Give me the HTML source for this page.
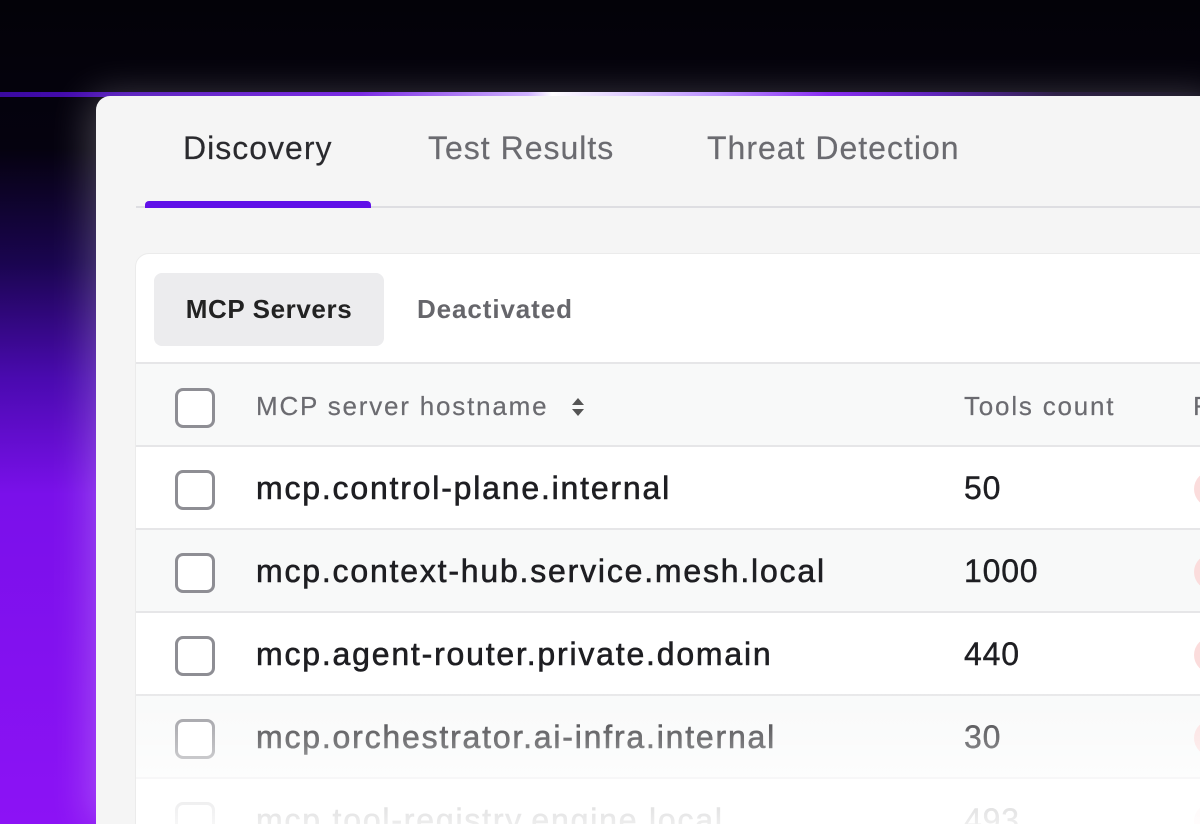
<!DOCTYPE html>
<html><head><style>
*{margin:0;padding:0;box-sizing:border-box}
html,body{width:1200px;height:824px;overflow:hidden}
body{background:#030208;font-family:"Liberation Sans",sans-serif;position:relative}
.bg{position:absolute;left:0;top:0;width:1200px;height:824px;background:linear-gradient(180deg,#030208 0%,#05020f 18%,#1a0550 32%,#4a0ab0 46%,#7a10ea 60%,#8c12f5 100%)}
.glow{position:absolute;left:0;top:92px;width:1200px;height:5px;background:linear-gradient(90deg,#3a0aa0 0%,#6a10e0 30%,#c9a8ff 44%,#ffffff 46%,#b080ff 60%,#7a12f0 69%,#4a0ab0 78%,#150530 88%,#050210 100%)}
.card{position:absolute;left:96px;top:96px;width:1130px;height:728px;background:#f5f5f5;border-radius:14px 14px 0 0;overflow:hidden;box-shadow:-6px 0 40px rgba(255,255,255,.25)}
.tab{position:absolute;top:34px;font-size:32px;color:#6b6b70;letter-spacing:1px;-webkit-text-stroke:.2px currentColor}
.tabline{position:absolute;left:40px;top:110px;width:1100px;height:2px;background:#dedee2}
.tabbar{position:absolute;left:49px;top:105px;width:226px;height:7px;background:#6010e8;border-radius:4px 4px 0 0}
.inner{position:absolute;left:39px;top:157px;width:1100px;height:580px;background:#fff;border-radius:14px 14px 0 0;border:1px solid #ebebeb;overflow:hidden}
.pill{position:absolute;left:18px;top:19px;width:230px;height:73px;background:#ececee;border-radius:8px;font-size:26px;font-weight:bold;color:#222;line-height:73px;text-align:center;letter-spacing:.6px}
.deact{position:absolute;left:281px;top:19px;line-height:73px;font-size:26px;font-weight:bold;color:#66666b;letter-spacing:.9px}
.row{position:absolute;left:0;width:1100px;height:83px;border-top:2px solid #e6e6e8}
.cb{position:absolute;left:39px;top:23px;width:40px;height:40px;border:3px solid #8e8e94;border-radius:8px;background:#fff}
.host{position:absolute;left:120px;top:0;line-height:82px;font-size:32px;color:#1e1e22;letter-spacing:1.8px;-webkit-text-stroke:.6px currentColor}
.cnt{position:absolute;left:828px;top:0;line-height:82px;font-size:32px;color:#1e1e22;letter-spacing:.8px;-webkit-text-stroke:.4px currentColor}
.dot{position:absolute;left:1058px;top:24px;width:36px;height:36px;border-radius:50%;background:#fbdcdc}
.hdr .host,.hdr .cnt{font-size:26px;color:#6b6b70;letter-spacing:1.8px;-webkit-text-stroke:.2px currentColor}
.fade{position:absolute;left:0;top:440px;width:1100px;height:140px;background:linear-gradient(180deg,rgba(255,255,255,.1) 0%,rgba(255,255,255,.4) 35%,rgba(255,255,255,.85) 75%,rgba(255,255,255,.95) 100%)}
</style></head><body>
<div class="bg"></div>
<div class="glow"></div>
<div class="card">
  <div class="tab" style="left:87px;color:#2a2a2e">Discovery</div>
  <div class="tab" style="left:332px">Test Results</div>
  <div class="tab" style="left:611px">Threat Detection</div>
  <div class="tabline"></div>
  <div class="tabbar"></div>
  <div class="inner">
    <div class="pill">MCP Servers</div>
    <div class="deact">Deactivated</div>
    <div class="row hdr" style="top:108px;height:85px;background:#f8f9f9"><div class="cb" style="top:24px"></div><div class="host" style="line-height:84px">MCP server hostname</div>
      <svg style="position:absolute;left:434px;top:32px" width="16" height="22" viewBox="0 0 16 22"><path d="M8 2L14 9H2Z M8 20L14 13H2Z" fill="#555"/></svg>
      <div class="cnt" style="line-height:84px">Tools count</div><div class="host" style="left:1057px;line-height:84px">F</div></div>
    <div class="row" style="top:191px"><div class="cb"></div><div class="host">mcp.control-plane.internal</div><div class="cnt">50</div><div class="dot"></div></div>
    <div class="row" style="top:274px;background:#f8f9f9"><div class="cb"></div><div class="host">mcp.context-hub.service.mesh.local</div><div class="cnt">1000</div><div class="dot"></div></div>
    <div class="row" style="top:357px"><div class="cb"></div><div class="host">mcp.agent-router.private.domain</div><div class="cnt">440</div><div class="dot"></div></div>
    <div class="row" style="top:440px;background:#f8f9f9"><div class="cb"></div><div class="host">mcp.orchestrator.ai-infra.internal</div><div class="cnt">30</div><div class="dot"></div></div>
    <div class="row" style="top:523px"><div class="cb"></div><div class="host">mcp.tool-registry.engine.local</div><div class="cnt">493</div><div class="dot"></div></div>
    <div class="fade"></div>
  </div>
</div>
</body></html>
